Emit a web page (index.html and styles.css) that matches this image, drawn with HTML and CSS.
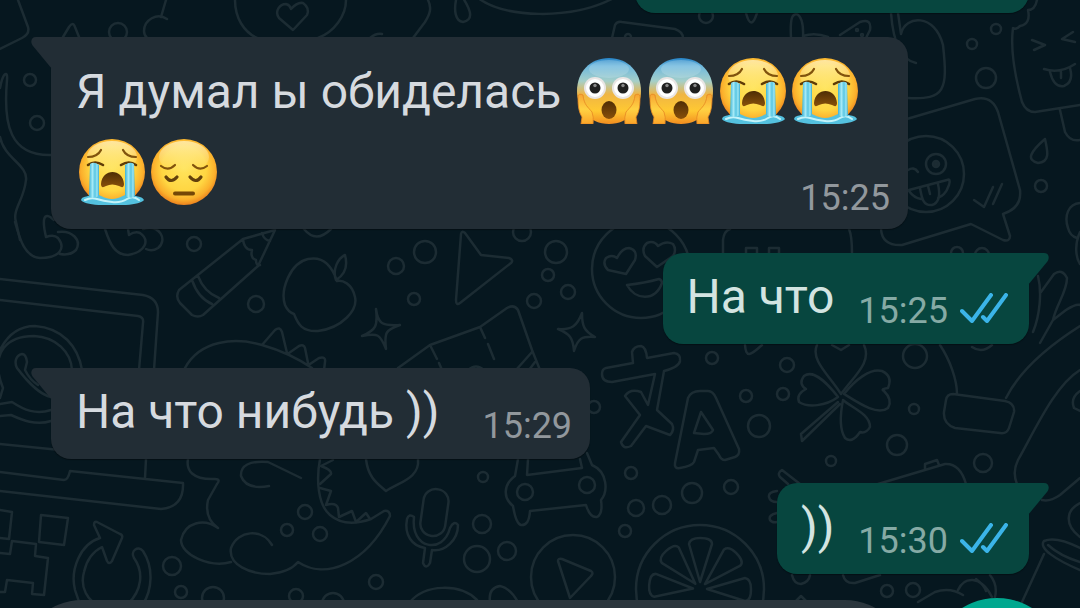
FILE: index.html
```html
<!DOCTYPE html>
<html lang="ru">
  <head>
    <meta charset="UTF-8" />
    <meta name="viewport" content="width=device-width, initial-scale=1.0" />
    <title>Чат</title>
    <link rel="stylesheet" href="styles.css">
  </head>

  <body>
    <!-- shared shapes -->
    <svg class="sprite" width="0" height="0" aria-hidden="true">
      <defs>
        <radialGradient id="skin" cx="50%" cy="45%" r="56%">
          <stop offset="0" stop-color="#ffe45c" />
          <stop offset="0.6" stop-color="#ffd642" />
          <stop offset="0.84" stop-color="#fbb02c" />
          <stop offset="1" stop-color="#ea7c1c" />
        </radialGradient>
        <linearGradient id="shine" x1="0" y1="0" x2="0" y2="1">
          <stop offset="0" stop-color="#fff3c4" stop-opacity="0.75" />
          <stop offset="1" stop-color="#fff0a0" stop-opacity="0" />
        </linearGradient>
        <linearGradient id="fear" x1="0" y1="0" x2="0" y2="1">
          <stop offset="0" stop-color="#2583c7" />
          <stop offset="0.12" stop-color="#6eb8de" />
          <stop offset="0.35" stop-color="#a5cfc9" />
          <stop offset="0.55" stop-color="#efb544" />
          <stop offset="0.8" stop-color="#ffc932" />
          <stop offset="1" stop-color="#f28d20" />
        </linearGradient>
        <linearGradient id="hand" x1="0" y1="0" x2="0" y2="1">
          <stop offset="0" stop-color="#f6a434" />
          <stop offset="0.5" stop-color="#ffd243" />
          <stop offset="1" stop-color="#fba429" />
        </linearGradient>
        <linearGradient id="tear" x1="0" y1="0" x2="1" y2="0">
          <stop offset="0" stop-color="#3db3d6" />
          <stop offset="0.35" stop-color="#a4e9f6" />
          <stop offset="0.6" stop-color="#58c5e2" />
          <stop offset="0.8" stop-color="#9ce6f4" />
          <stop offset="1" stop-color="#3aaccf" />
        </linearGradient>
        <linearGradient id="mouth" x1="0" y1="0" x2="0" y2="1">
          <stop offset="0" stop-color="#4e2d05" />
          <stop offset="1" stop-color="#88500a" />
        </linearGradient>

        <symbol id="emoji-cry" viewBox="0 0 66 66">
          <circle cx="33" cy="33" r="33" fill="url(#skin)" />
          <ellipse cx="33" cy="18" rx="25" ry="16" fill="url(#shine)" />
          <path d="M9 18C15 18 20 15 22 11M57 18C51 18 46 15 44 11" fill="none" stroke="#81530d" stroke-width="2.2" stroke-linecap="round" />
          <path d="M9 26Q16 21 24 26M57 26Q50 21 42 26" fill="none" stroke="#5f3b07" stroke-width="2.6" stroke-linecap="round" />
          <path d="M2 61C3 57 8 58 12 56C18 53 22 58 27 59Q33 61 39 59C44 58 48 53 54 56C58 58 63 57 65 61C62 65 50 66 33 67C17 66 4 65 2 61Z" fill="#54c1df" />
          <path d="M6 61Q12 58 18 60T33 63T48 60T60 61" fill="none" stroke="#c4f3fa" stroke-width="2" stroke-linecap="round" />
          <path d="M11 25Q15 22 20 26L20 57Q15 60 10 58Z" fill="url(#tear)" />
          <path d="M46 26Q51 22 55 25L56 58Q51 60 46 57Z" fill="url(#tear)" />
          <path d="M22 45C23 29 44 29 45 45Q45 50 40 47Q33 44 27 47Q22 50 22 45Z" fill="url(#mouth)" />
        </symbol>

        <symbol id="emoji-scream" viewBox="0 0 66 66">
          <path d="M33 0C52 0 65 14 65 33C65 50 53 66 33 66C13 66 1 50 1 33C1 14 14 0 33 0Z" fill="url(#fear)" />
          <ellipse cx="33" cy="11" rx="20" ry="9" fill="#d5edf3" opacity="0.25" />
          <circle cx="19" cy="30" r="11" fill="#e9e5e4" />
          <circle cx="47" cy="30" r="11" fill="#e9e5e4" />
          <circle cx="19" cy="30" r="9" fill="#fff" />
          <circle cx="47" cy="30" r="9" fill="#fff" />
          <circle cx="19" cy="30" r="5.5" fill="#202020" />
          <circle cx="47" cy="30" r="5.5" fill="#202020" />
          <circle cx="19" cy="27.5" r="1.7" fill="#888" />
          <circle cx="47" cy="27.5" r="1.7" fill="#888" />
          <ellipse cx="33" cy="52" rx="7.5" ry="9" fill="url(#mouth)" />
          <path d="M2 38Q3 35 7 37C8 47 12 49 16 54Q18 59 17 66L5 66L6 59C2 53 2 45 2 38Z" fill="url(#hand)" stroke="#e68722" stroke-width="0.8" />
          <path d="M64 38Q63 35 59 37C58 47 54 49 50 54Q48 59 49 66L61 66L60 59C64 53 64 45 64 38Z" fill="url(#hand)" stroke="#e68722" stroke-width="0.8" />
        </symbol>

        <symbol id="emoji-sad" viewBox="0 0 66 66">
          <circle cx="33" cy="33" r="33" fill="url(#skin)" />
          <ellipse cx="33" cy="18" rx="25" ry="16" fill="url(#shine)" />
          <path d="M10 27C15 31 20 30 24 26M56 27C51 31 46 30 42 26" fill="none" stroke="#81530d" stroke-width="2.2" stroke-linecap="round" />
          <path d="M15 38Q20 45 26 38M39 38Q45 45 50 38" fill="none" stroke="#62400c" stroke-width="3.2" stroke-linecap="round" />
          <path d="M24 54.500H42" stroke="#744707" stroke-width="4" stroke-linecap="round" />
        </symbol>

        <symbol id="ticks" viewBox="0 0 48 30">
          <path d="M2 18L12 28L31 2M23 24L27 28L46 2" fill="none" stroke="#3bb4e8" stroke-width="4" stroke-linecap="round" stroke-linejoin="round" />
        </symbol>
        <symbol id="tail" viewBox="0 0 21 32">
          <path d="M21 0H5C0 0-1 5 2 9L21 32Z" fill="currentColor" />
        </symbol>
      </defs>
    </svg>

    <!-- doodle wallpaper -->
    <svg class="wallpaper" viewBox="0 0 1080 608" preserveAspectRatio="xMidYMid slice" aria-hidden="true">
      <g class="doodles">
        <!-- top strip -->
        <path d="M18 0L28 27Q30 34 22 38L0 49M63 37L69 27Q73 21 75 27L79 37M166 0L161 17M167 19C157 12 144 20 144 31Q144 35 147 38" />
        <circle cx="118" cy="32" r="9" />
        <path d="M235 0C235 18 244 32 257 38M346 0C346 16 334 32 318 38" />
        <path d="M293 30L279 18C274 11 280 4 286 4Q290 5 291 9Q297 2 303 3Q310 8 307 15Z" />
        <path d="M428 0C432 8 430 14 425 22L413 38M370 38Q376 33 382 34M456 0C454 10 455 21 463 22C473 20 472 12 463-2M478-2C505 18 570 20 612-1" />
        <path d="M612 38L615 25Q617 21 622 22L675 29Q683 32 683 38M746 13Q751 32 757 13M791 38C790 18 792 14 797 14Q804 18 803 38M803 36Q815 32 828 37M840 35L860 22Q872 18 870 30L866 38" />
        <circle cx="628" cy="37" r="3" /><circle cx="706" cy="16" r="7" />
        <circle cx="857" cy="30" r="1" /><circle cx="862" cy="35" r="1" />

        <!-- left edge -->
        <path d="M0 88C3 72 8 70 7 80C3 125 10 156 51 155M0 137C4 158 28 165 26 180C24 200 12 210 16 222L20 240" />
        <circle cx="30" cy="80" r="6" /><circle cx="37" cy="123" r="7" />
        <path d="M15 222C20 240 25 257 40 258C60 258 66 248 58 238Q54 234 46 237C42 220 43 210 54 220M58 232C72 230 82 240 76 250Q70 256 60 254M105 229C110 244 115 255 128 255C146 252 150 240 140 233Q135 231 129 235L128 229M143 229C160 224 168 240 158 248Q152 252 146 249" />

        <!-- pencil and apple -->
        <circle cx="194" cy="244" r="7" /><circle cx="256" cy="304" r="8" />
        <path d="M243 239L179 290Q175 297 180 303L192 315Q198 318 203 315L258 266L275 230ZM243 239Q244 250 252 250Q250 258 256 260Q256 266 260 265M192 280Q198 298 212 304M198 276Q204 292 219 298M262 233Q264 240 270 241M304 229Q316 244 331 229" />
        <path d="M337 281C330 260 318 257 308 259C290 263 280 290 285 305Q288 312 294 314C298 324 302 332 318 331C342 328 358 310 355 297C352 283 342 280 337 281M336 280C332 270 338 258 345 255C348 266 346 274 336 280" />

        <!-- laptop -->
        <path d="M0 279L143 295Q158 298 158 312L154 370M0 300L138 316Q144 317 143 323L139 370M0 444L60 450M0 472L64 480Q68 480 70 471L183 483Q184 507 161 509L0 491M146 459L145 478" />
        <path d="M51 410C36 415 24 410 12 402L0 404M51 421C36 426 22 420 11 415L0 416M0 398L3 388C-12 350 10 336 34 336C56 337 71 352 72 370M0 350C8 334 20 326 35 326C62 328 78 346 82 370M51 397C40 395 26 380 17 368C14 362 16 355 22 354Q26 354 27 362L25 370Q30 380 38 385" />
        <path d="M0 510L12 512L9 539L0 538M41 515L68 518L64 545L39 542ZM0 553L10 554L12 541L36 544L35 556L48 558L44 595L32 594L33 583L7 580L5 592L0 592" />
        <path d="M104 608C86 602 80 586 84 572C87 558 94 551 102 547L107 561Q109 565 112 561L122 538Q123 535 120 534L97 522Q94 521 94 525L100 538C80 544 70 570 75 590Q78 600 82 608M134 558C130 551 138 545 143 551C154 568 152 590 143 604M134 558C144 572 142 590 128 604" />

        <!-- dinosaur -->
        <path d="M185 368C200 340 235 337 262 345Q290 353 312 368M262 345L275 330Q280 326 282 332L287 353M289 353L299 346Q304 344 305 348L308 363M310 364L319 358Q326 356 325 362L324 370" />
        <path d="M188 459C186 470 192 480 215 479Q221 479 217 484L208 500Q204 518 218 528C204 518 185 522 181 540C181 555 210 568 231 562M272 545C262 528 238 530 231 548C228 565 250 574 270 574Q290 572 298 562C325 580 365 565 390 516Q390 510 384 511L371 519M301 478L268 462Q240 460 241 476Q246 490 269 486M320 459C316 480 318 505 330 515Q345 528 371 519" />
        <path d="M333 460L321 466Q332 470 331 474L320 484M320 488L331 491L326 505Q336 502 338 508L339 517L352 511L356 522L366 513L370 519" />
        <circle cx="172" cy="566" r="9" /><circle cx="181" cy="592" r="6" /><circle cx="213" cy="598" r="11" />
        <circle cx="296" cy="596" r="7" /><circle cx="333" cy="604" r="11" /><circle cx="305" cy="512" r="7" />
        <circle cx="287" cy="530" r="6" /><circle cx="320" cy="534" r="7" />

        <!-- paper plane, stars, ticket -->
        <circle cx="396" cy="266" r="8" /><circle cx="425" cy="252" r="11" /><circle cx="414" cy="299" r="6" />
        <path d="M465 233L481 255L509 258Q514 260 511 263L460 303Q456 306 456 300L461 234Q462 230 465 233Z" />
        <circle cx="522" cy="232" r="9" /><circle cx="556" cy="252" r="11" /><circle cx="548" cy="275" r="6" />
        <circle cx="568" cy="292" r="7" /><circle cx="534" cy="301" r="7" />
        <path d="M376 309C378 324 382 326 400 325C386 330 384 332 386 349C380 334 378 333 362 336C376 330 378 326 376 309ZM582 313C582 326 584 331 595 337C582 336 578 338 574 351C573 338 570 334 558 329C572 330 577 326 582 313Z" />
        <path d="M398 368L430 345L480 327L507 308Q514 304 518 310L532 350L540 370M430 345l7 14M439 363l3 7M480 327l5 11M488 344l6 15M532 352L516 370M535 362L529 370M468 370Q476 363 484 370" />

        <!-- heart eyes -->
        <circle cx="641" cy="269" r="49" />
        <path d="M626 274L608 270Q602 264 606 258Q612 254 617 258Q622 248 629 248Q638 250 635 260ZM657 267L645 256Q641 248 647 243Q654 240 658 246Q666 240 673 244Q677 250 673 256ZM627 285C635 300 655 302 662 283Q662 280 659 279Q645 283 627 285Z" />
        <path d="M723 253V240Q724 231 730 229M849 229Q852 236 852 253M746 253V248H757V253M769 253V248H779V253" />

        <!-- translate -->
        <path d="M606 368L633 363L632 352Q634 346 641 346Q646 347 647 358L674 353Q681 354 680 361Q679 367 664 371L657 410L672 424Q675 430 670 435L646 426L631 446Q623 450 621 442L640 415L625 396Q630 388 641 392L648 405L655 374L612 382Q602 382 602 374Q602 369 606 368Z" />
        <path d="M675 463L688 398Q691 391 700 391H708Q713 391 716 398L739 449Q740 455 735 457L725 460Q721 460 719 455L714 448L698 450L694 462Q692 466 680 468Q674 469 675 463ZM694 433L701 412L713 430Q712 434 704 434Z" />
        <circle cx="594" cy="407" r="6" /><circle cx="712" cy="358" r="6" /><circle cx="787" cy="365" r="7" />
        <circle cx="746" cy="396" r="6" /><circle cx="783" cy="394" r="6" /><circle cx="759" cy="426" r="11" />
        <circle cx="915" cy="356" r="12" /><circle cx="914" cy="409" r="5" /><circle cx="897" cy="445" r="10" />
        <circle cx="831" cy="461" r="5" /><circle cx="983" cy="463" r="9" /><circle cx="731" cy="487" r="7" />

        <!-- clover -->
        <path d="M745 345C746 358 750 356 762 345M841 394C830 376 810 360 817 345M841 394C855 375 872 362 864 345M832 345L841 350L849 345" />
        <path d="M838 397C825 380 812 370 804 376Q798 384 806 389Q796 394 799 402C808 408 826 406 838 397M844 394C855 380 870 368 882 371Q893 376 888 388Q880 389 884 391Q893 400 888 408C878 416 860 404 844 394M843 400C840 415 840 430 845 438Q852 444 860 432Q866 434 870 427C870 414 852 408 843 400M838 402L801 434L802 441L840 404" />

        <!-- glove -->
        <path d="M940 345C950 360 957 380 957 394M1006 398C1020 370 1050 345 1080 326M953 394L1005 401Q1015 403 1014 412L1009 428Q1007 434 1000 433L955 428Q943 424 944 412L946 400Q947 394 953 394Z" />
        <path d="M1038 276C1042 292 1040 315 1033 332M1041 292L1054 274Q1062 268 1067 278C1067 292 1056 305 1053 320L1066 310Q1078 302 1082 306M1053 320L1040 343M972 347Q982 354 992 345" />
        <path d="M1080 370C1055 385 1035 430 1018 460Q1012 472 1017 484M1080 391Q1070 398 1074 408L1080 411M1042 500Q1050 502 1060 495L1080 478M1080 503C1066 510 1064 525 1080 537" />

        <!-- winking sticker -->
        <path d="M891 13C893 40 900 60 916 63M898 13L901 34C905 15 935 13 943 45C948 90 945 100 908 98" />
        <path d="M900 121L975 99Q992 95 998 112L1020 190Q1022 208 1003 214L1010 236Q1010 242 1003 240L971 224L902 245Q882 246 881 229" />
        <circle cx="926" cy="174" r="38" /><circle cx="936" cy="164" r="10" /><circle class="dot" cx="936" cy="164" r="3" />
        <path d="M908 170Q914 166 918 172M909 190L947 180Q951 178 949 185C946 194 942 196 938 198M909 191Q914 198 921 199M920 188C922 200 924 206 932 205Q942 202 938 184M928 186l2 8M974 200L984 207L993 187M993 204L1002 184" />
        <circle cx="972" cy="44" r="5" /><circle cx="996" cy="29" r="5" /><circle cx="986" cy="78" r="10" /><circle cx="1041" cy="186" r="6" />
        <circle cx="957" cy="253" r="6" /><circle cx="982" cy="255" r="7" />

        <!-- ice cream -->
        <path d="M1037 0Q1035 10 1028 10Q1031 24 1020 26Q1016 30 1013 28C1010 50 1016 80 1022 102Q1026 112 1035 112L1080 105M1060 110L1065 132Q1070 142 1080 140M1032 40L1045 45L1034 50M1073 32L1062 39L1075 42M1044 69Q1060 74 1075 64M1050 72Q1054 88 1064 86Q1074 82 1070 68M1061 72V78" />
        <path d="M1045 139C1030 152 1026 160 1038 163C1050 162 1048 152 1045 139ZM1080 203C1068 204 1064 216 1068 228Q1070 236 1077 238M1080 232C1074 245 1076 258 1080 264" />

        <!-- mic -->
        <path d="M366 459C368 478 378 484 386 491C400 482 420 478 418 459" />
        <rect x="422" y="489" width="25" height="47" rx="12" transform="rotate(8 434 512)" />
        <path d="M407 519Q409 513 414 517C410 549 443 555 450 528Q454 520 458 525C458 540 445 552 432 550L430 563Q426 570 423 563L425 548C412 546 404 535 407 519Z" />
        <circle cx="483" cy="477" r="5" /><circle cx="482" cy="524" r="9" /><circle cx="477" cy="559" r="13" />
        <circle cx="507" cy="551" r="9" /><circle cx="376" cy="582" r="7" />
        <path d="M410 602C425 584 460 583 477 600M490 602Q488 588 500 586Q510 588 518 602" />

        <!-- car -->
        <path d="M518 459L515 476C503 485 503 498 513 506Q516 524 521 525Q529 526 530 511L586 505Q590 518 597 517Q603 514 601 500C608 492 608 472 592 465L587 453M528 459L527 475L582 468L580 459" />
        <circle cx="525" cy="492" r="8" /><circle cx="587" cy="485" r="8" />
        <circle cx="631" cy="473" r="6" /><circle cx="636" cy="508" r="8" /><circle cx="662" cy="505" r="9" />
        <circle cx="692" cy="493" r="10" /><circle cx="625" cy="531" r="6" />
        <circle cx="573" cy="577" r="42" />
        <path d="M558 561Q558 558 562 559L591 571Q594 573 591 576L570 598Z" />

        <!-- orange slice -->
        <g transform="translate(700 589)">
          <circle r="64" />
          <path d="M0-7L-11-45Q-10-51 0-51Q12-51 12-45Z" />
          <path d="M0-7L-11-45Q-10-51 0-51Q12-51 12-45Z" transform="rotate(45)" />
          <path d="M0-7L-11-45Q-10-51 0-51Q12-51 12-45Z" transform="rotate(-42)" />
          <path d="M0-7L-11-45Q-10-51 0-51Q12-51 12-45Z" transform="rotate(90)" />
          <path d="M0-7L-11-45Q-10-51 0-51Q12-51 12-45Z" transform="rotate(-86)" />
        </g>

        <!-- camera and cup -->
        <path d="M800 484L782 470Q777 473 780 477L788 484M777 491Q768 492 769 497Q770 502 777 502M777 513Q768 515 770 520Q772 523 777 522M878 484L945 464Q960 463 966 484M925 469L925 464L937 460L939 465M792 575Q794 584 801 584Q809 582 810 575M843 575Q845 584 855 583L880 575" />
        <path d="M1044 541C1038 548 1056 560 1080 570M1044 541Q1056 536 1080 548M1048 545Q1060 556 1080 562M1044 554L1022 602M918 602L935 592Q950 587 963 595M958 590C964 577 980 574 992 597M976 579Q984 585 986 591M990 575Q998 585 995 597M796 601L801 596L806 601" />
        <circle cx="887" cy="591" r="6" /><circle cx="913" cy="590" r="7" />
      </g>
    </svg>

    <div class="app">
      <main class="chat">
        <div class="bubble out previous"></div>

        <div class="bubble in long">
          <svg class="tail" aria-hidden="true"><use href="#tail" /></svg>
          <p class="text">Я думал ы обиделась <svg class="emoji" role="img" aria-label="😱"><use href="#emoji-scream" /></svg><svg class="emoji" role="img" aria-label="😱"><use href="#emoji-scream" /></svg><svg class="emoji" role="img" aria-label="😭"><use href="#emoji-cry" /></svg><svg class="emoji" role="img" aria-label="😭"><use href="#emoji-cry" /></svg><wbr><svg class="emoji" role="img" aria-label="😭"><use href="#emoji-cry" /></svg><svg class="emoji" role="img" aria-label="😔"><use href="#emoji-sad" /></svg></p>
          <time class="time">15:25</time>
        </div>

        <div class="bubble out">
          <svg class="tail" aria-hidden="true"><use href="#tail" /></svg>
          <p class="text">На что</p>
          <time class="time">15:25</time>
          <svg class="ticks" role="img" aria-label="Прочитано"><use href="#ticks" /></svg>
        </div>

        <div class="bubble in">
          <svg class="tail" aria-hidden="true"><use href="#tail" /></svg>
          <p class="text">На что нибудь ))</p>
          <time class="time">15:29</time>
        </div>

        <div class="bubble out">
          <svg class="tail" aria-hidden="true"><use href="#tail" /></svg>
          <p class="text">))</p>
          <time class="time">15:30</time>
          <svg class="ticks" role="img" aria-label="Прочитано"><use href="#ticks" /></svg>
        </div>
      </main>

      <form class="composer">
        <input class="field" type="text" aria-label="Сообщение" />
        <button class="mic" type="button" aria-label="Голосовое сообщение"></button>
      </form>
    </div>
  </body>
</html>
```
FILE: styles.css
```css
* {
  box-sizing: border-box;
}
body {
  margin: 0;
  font-family: Roboto, 'Noto Sans', sans-serif;
  background-color: #06171f;
  overflow: hidden;
}
.sprite {
  position: absolute;
}
.wallpaper {
  position: absolute;
  top: 0;
  left: 0;
  width: 100%;
  height: 100%;
}
.doodles {
  fill: none;
  stroke: #1c2c33;
  stroke-width: 2.5;
  stroke-linecap: round;
  stroke-linejoin: round;
}
.doodles .dot {
  fill: #1c2c33;
}
.app {
  position: relative;
  height: 100vh;
  overflow: hidden;
}

/* messages */
.chat {
  display: flex;
  flex-direction: column;
  gap: 24px;
  padding: 0 51px;
}
.bubble {
  position: relative;
  display: flex;
  align-items: flex-end;
  max-width: calc(100% - 121px);
  padding: 12px 18px 15px 25px;
  border-radius: 20px;
  box-shadow: 0 1px 1px rgba(0, 0, 0, 0.35);
}
.in {
  align-self: flex-start;
  background-color: #222d35;
  color: #222d35;
  border-top-left-radius: 0;
}
.out {
  align-self: flex-end;
  background-color: #07463f;
  color: #07463f;
  padding-left: 24px;
  padding-right: 21px;
  border-top-right-radius: 0;
}
.previous {
  width: 394px;
  height: 92px;
  margin-top: -79px;
}
.long {
  display: grid;
  padding-top: 14px;
  padding-bottom: 16px;
}
.long .text,
.long .time {
  grid-area: 1 / 1;
}
.text {
  margin: 0;
  font-size: 48px;
  line-height: 64px;
  color: #d6dadf;
}
.long .text {
  line-height: 81px;
}
.out .text {
  color: #d3e4e1;
}
.time {
  margin-left: 24px;
  font-size: 36px;
  line-height: 36px;
  color: #92989d;
}
.in .time {
  margin-left: 43px;
}
.long .time {
  align-self: end;
  justify-self: end;
  margin-bottom: -3px;
}
.out .time {
  color: #86aaa5;
}
.emoji {
  width: 66px;
  height: 66px;
  margin: 0 3px;
  vertical-align: -16px;
  overflow: visible;
}
.ticks {
  width: 48px;
  height: 30px;
  margin-left: 12px;
  margin-bottom: 6px;
}
.tail {
  position: absolute;
  top: 0;
  left: -20px;
  width: 21px;
  height: 32px;
}
.out .tail {
  left: auto;
  right: -20px;
  transform: scaleX(-1);
}

/* bottom bar */
.composer {
  display: flex;
  gap: 24px;
  margin-top: 24px;
  padding: 0 17px 0 20px;
}
.field {
  flex: 1;
  min-width: 0;
  height: 124px;
  margin-top: 2px;
  padding: 0 48px;
  border: none;
  outline: none;
  border-radius: 62px;
  background-color: #2b363d;
  color: #d6dadf;
  font: inherit;
  font-size: 48px;
}
.mic {
  width: 132px;
  height: 132px;
  border: none;
  border-radius: 50%;
  background-color: #00a88f;
  cursor: pointer;
}
```
